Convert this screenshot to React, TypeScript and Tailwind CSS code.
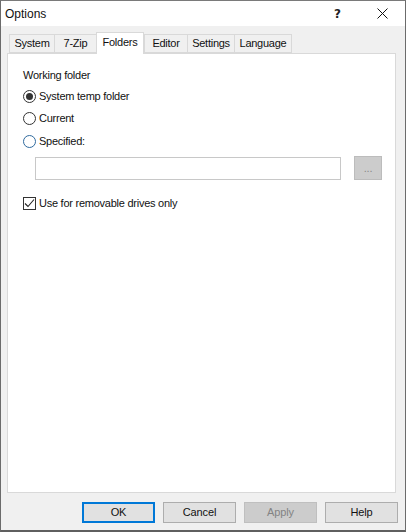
import React from "react";

const tabs = [
  { label: "System", w: "w-[45px]" },
  { label: "7-Zip", w: "w-[42px]" },
  { label: "Folders", w: "w-[48px]", active: true },
  { label: "Editor", w: "w-[43px]" },
  { label: "Settings", w: "w-[47px]" },
  { label: "Language", w: "w-[58px]" },
];

function Radio({ checked, blue }: { checked?: boolean; blue?: boolean }) {
  return (
    <span
      className={`flex h-[13px] w-[13px] shrink-0 items-center justify-center rounded-full border bg-white ${
        blue ? "border-[#2f6a9e]" : "border-[#333333]"
      }`}
    >
      {checked && <span className="h-[7px] w-[7px] rounded-full bg-[#333333]" />}
    </span>
  );
}

function Btn({ children, cls }: { children: React.ReactNode; cls: string }) {
  return (
    <button className={`flex h-[21px] w-[73px] items-center justify-center tracking-[-0.1px] ${cls}`}>{children}</button>
  );
}

export default function App() {
  return (
    <div className="flex h-[532px] w-[406px] flex-col overflow-hidden border-x border-t border-b-2 border-x-[#6b6b6b] border-t-[#7a7a7a] border-b-[#5f5f5f] bg-[#f0f0f0] font-['Liberation_Sans',sans-serif] text-[11px] tracking-[-0.25px] text-[#111111]">
      <div className="flex h-[25px] shrink-0 items-center bg-white pl-[4px] text-[12px] tracking-normal">
        <span className="flex-1">Options</span>
        <span className="mr-[36px] font-['DejaVu_Sans',sans-serif] text-[12px] font-bold text-[#222222]">?</span>
        <svg className="mr-[17px]" width="11" height="11" viewBox="0 0 11 11" fill="none" stroke="#111111" strokeWidth="1">
          <path d="M0.5 0.5L10.5 10.5M10.5 0.5L0.5 10.5" />
        </svg>
      </div>

      <div className="flex h-[27px] shrink-0 items-end pl-[8px]">
        {tabs.map((t) =>
          t.active ? (
            <div
              key={t.label}
              className={`relative z-10 -mb-px flex h-[22px] ${t.w} items-center justify-center border-x border-t border-[#d9d9d9] bg-white pb-[2px]`}
            >
              {t.label}
            </div>
          ) : (
            <div
              key={t.label}
              className={`flex h-[19px] ${t.w} items-center justify-center border-y border-l border-[#d9d9d9] bg-[#f0f0f0] last:border-r`}
            >
              {t.label}
            </div>
          )
        )}
      </div>

      <div className="mr-[9px] ml-[6px] flex h-[440px] shrink-0 flex-col border border-[#d9d9d9] bg-white pt-[13px] pl-[15px]">
        <div className="leading-[16px]">Working folder</div>
        <div className="mt-[5px] flex h-[16px] items-center gap-[3px]">
          <Radio checked />
          <span>System temp folder</span>
        </div>
        <div className="mt-[6px] flex h-[16px] items-center gap-[3px]">
          <Radio />
          <span>Current</span>
        </div>
        <div className="mt-[7px] flex h-[16px] items-center gap-[3px]">
          <Radio blue />
          <span>Specified:</span>
        </div>
        <div className="mt-[7px] flex items-center">
          <div className="ml-[12px] h-[23px] w-[306px] border border-[#c8c8c8] bg-white" />
          <div className="ml-[13px] flex h-[24px] w-[28px] items-center justify-center border border-[#bcbcbc] bg-[#cccccc] text-[#8a8a8a]">
            ...
          </div>
        </div>
        <div className="mt-[15px] flex h-[16px] items-center gap-[3px]">
          <span className="flex h-[13px] w-[13px] shrink-0 items-center justify-center border border-[#333333] bg-white">
            <svg width="11" height="11" viewBox="0 0 11 11" fill="none" stroke="#222222" strokeWidth="1.1">
              <path d="M1 5.5L4 8.5L10 1.5" />
            </svg>
          </span>
          <span>Use for removable drives only</span>
        </div>
      </div>

      <div className="mt-[9px] flex justify-end gap-[8px] pr-[7px]">
        <Btn cls="border-2 border-[#0078d7] bg-[#e1e1e1]">OK</Btn>
        <Btn cls="border border-[#adadad] bg-[#e1e1e1]">Cancel</Btn>
        <Btn cls="border border-[#bfbfbf] bg-[#cccccc] text-[#838383]">Apply</Btn>
        <Btn cls="border border-[#adadad] bg-[#e1e1e1]">Help</Btn>
      </div>
    </div>
  );
}
